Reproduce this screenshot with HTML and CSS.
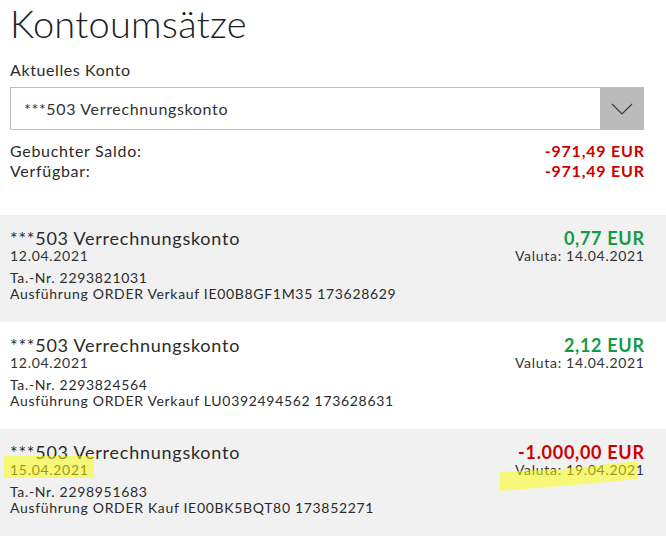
FILE: index.html
```html
<!DOCTYPE html>
<html>
<head>
    <meta charset="UTF-8">
    <title>Kontoumsätze</title>
    <link rel="stylesheet" href="styles.css">
</head>
<body>
    <div class="head">
        <h1 class="title">Kontoumsätze</h1>
        <div class="label">Aktuelles Konto</div>
        <div class="select">
            <span class="select-text">***503 Verrechnungskonto</span>
            <span class="select-btn">
                <svg width="22" height="12" viewBox="0 0 22 12"><path d="M1 1 L11 11 L21 1" fill="none" stroke="#3a3a3a" stroke-width="1.2"/></svg>
            </span>
        </div>
        <div class="saldo">
            <div class="saldo-row"><span>Gebuchter Saldo:</span><span class="neg">-971,49 EUR</span></div>
            <div class="saldo-row"><span>Verfügbar:</span><span class="neg">-971,49 EUR</span></div>
        </div>
    </div>

    <div class="list">
        <div class="tx grey">
            <div class="tx-top">
                <div>
                    <div class="tx-name">***503 Verrechnungskonto</div>
                    <div class="tx-date">12.04.2021</div>
                </div>
                <div class="tx-right">
                    <div class="amount pos">0,77 EUR</div>
                    <div class="tx-date">Valuta: 14.04.2021</div>
                </div>
            </div>
            <div class="tx-info">Ta.-Nr. 2293821031</div>
            <div class="tx-info">Ausführung ORDER Verkauf IE00B8GF1M35 173628629</div>
        </div>
        <div class="tx">
            <div class="tx-top">
                <div>
                    <div class="tx-name">***503 Verrechnungskonto</div>
                    <div class="tx-date">12.04.2021</div>
                </div>
                <div class="tx-right">
                    <div class="amount pos">2,12 EUR</div>
                    <div class="tx-date">Valuta: 14.04.2021</div>
                </div>
            </div>
            <div class="tx-info">Ta.-Nr. 2293824564</div>
            <div class="tx-info">Ausführung ORDER Verkauf LU0392494562 173628631</div>
        </div>
        <div class="tx grey">
            <div class="tx-top">
                <div>
                    <div class="tx-name">***503 Verrechnungskonto</div>
                    <div class="tx-date"><span class="mark">15.04.2021</span></div>
                </div>
                <div class="tx-right">
                    <div class="amount neg">-1.000,00 EUR</div>
                    <div class="tx-date valuta-mark">Valuta: 19.04.2021
                        <svg class="marker" width="138" height="31" viewBox="0 0 138 31"><path d="M0 11 L62 8 L138 0 L138 18 L62 25 L0 30 Z" fill="#ffff00" fill-opacity="0.5"/></svg>
                    </div>
                </div>
            </div>
            <div class="tx-info">Ta.-Nr. 2298951683</div>
            <div class="tx-info">Ausführung ORDER Kauf IE00BK5BQT80 173852271</div>
        </div>
    </div>
</body>
</html>
```

FILE: styles.css
```css
* {
    margin: 0;
    padding: 0;
}
body {
    font-family: Lato, "Open Sans", sans-serif;
    color: #2b2b2b;
    width: 666px;
    overflow: hidden;
}
.head {
    padding: 0 22px 0 10px;
}
.title {
    font-size: 38px;
    font-weight: 300;
    line-height: 46px;
    letter-spacing: 0.25px;
    color: #1e1e1e;
}
.label {
    font-size: 16px;
    line-height: 20px;
    letter-spacing: 0.6px;
    margin-top: 14px;
}
.select {
    display: flex;
    height: 43px;
    margin-top: 7px;
    border: 1px solid #bdbdbd;
    border-right: none;
    box-sizing: border-box;
}
.select-text {
    flex: 1;
    font-size: 16px;
    letter-spacing: 0.65px;
    line-height: 41px;
    padding-left: 13px;
    color: #333;
}
.select-btn {
    width: 44px;
    margin: -1px 0;
    background: #bbbbbb;
    display: flex;
    align-items: center;
    justify-content: center;
}
.saldo {
    margin-top: 11px;
    font-size: 16px;
    line-height: 20px;
    letter-spacing: 0.7px;
}
.saldo-row {
    display: flex;
    justify-content: space-between;
}
.saldo .neg {
    letter-spacing: 0.8px;
    margin-right: -0.8px;
}
.neg {
    color: #cc0000;
    font-weight: 700;
}
.pos {
    color: #149a46;
    font-weight: 700;
}
.list {
    margin-top: 34px;
}
.tx {
    height: 107px;
    padding: 13px 22px 0 10px;
    box-sizing: border-box;
}
.tx.grey {
    background: #f1f1f1;
}
.tx-top {
    display: flex;
    justify-content: space-between;
    margin-bottom: 6px;
}
.tx-right {
    text-align: right;
    margin-right: -0.7px;
}
.tx-name {
    font-size: 18px;
    line-height: 20px;
    letter-spacing: 0.75px;
}
.amount {
    font-size: 18px;
    line-height: 20px;
    letter-spacing: 0.7px;
}
.tx-date {
    font-size: 14px;
    line-height: 16px;
    letter-spacing: 0.7px;
    color: #333;
}
.tx-info {
    font-size: 14px;
    line-height: 16px;
    letter-spacing: 0.68px;
}
.mark {
    position: relative;
}
.mark::after {
    content: "";
    position: absolute;
    left: -6px;
    right: -5px;
    top: -5px;
    bottom: 0;
    background: rgba(255, 255, 0, 0.5);
}
.valuta-mark {
    position: relative;
}
.marker {
    position: absolute;
    right: 7px;
    top: -1px;
}
```
